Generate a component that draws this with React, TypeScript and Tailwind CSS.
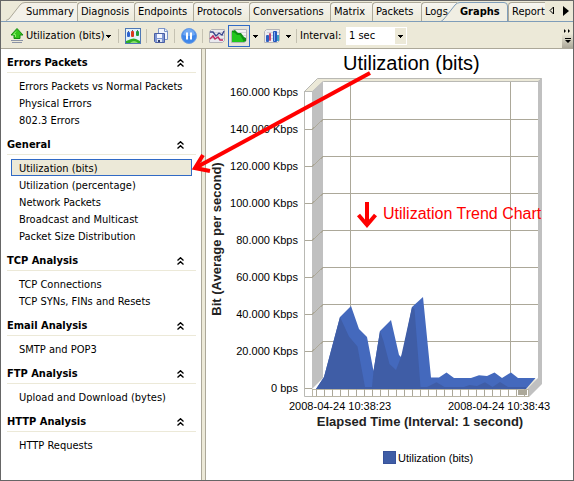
import type { ReactNode } from "react";

interface Tab {
  label: string;
  width: string;
}

interface Section {
  title: string;
  items: string[];
}

const tabs: Tab[] = [
  { label: "Diagnosis", width: "w-[57px]" },
  { label: "Endpoints", width: "w-[59px]" },
  { label: "Protocols", width: "w-[56px]" },
  { label: "Conversations", width: "w-[81px]" },
  { label: "Matrix", width: "w-[42px]" },
  { label: "Packets", width: "w-[49px]" },
  { label: "Logs", width: "w-[36px]" },
];

const sections: Section[] = [
  { title: "Errors Packets", items: ["Errors Packets vs Normal Packets", "Physical Errors", "802.3 Errors"] },
  {
    title: "General",
    items: [
      "Utilization (bits)",
      "Utilization (percentage)",
      "Network Packets",
      "Broadcast and Multicast",
      "Packet Size Distribution",
    ],
  },
  { title: "TCP Analysis", items: ["TCP Connections", "TCP SYNs, FINs and Resets"] },
  { title: "Email Analysis", items: ["SMTP and POP3"] },
  { title: "FTP Analysis", items: ["Upload and Download (bytes)"] },
  { title: "HTTP Analysis", items: ["HTTP Requests"] },
];

const selectedItem = "Utilization (bits)";

const TabBar = () => {
  const tabClass =
    "flex h-[19px] shrink-0 items-start overflow-hidden whitespace-nowrap rounded-tl-[4px] border-l border-t border-[#aca899] bg-linear-to-b from-[#f7f6f1] to-[#ece9d8] pl-[3px] text-left leading-[18px]";

  return (
    <nav className="relative flex h-[21px] items-end overflow-hidden border-b border-[#7f9db9] bg-[#ece9d8]">
      <button className="relative flex h-[19px] w-[76px] shrink-0 items-start pl-[25px] text-left leading-5">
        <svg className="absolute left-[5px] top-0" width="71" height="19" viewBox="0 0 71 19">
          <path d="M0 18.5 L3 17 L14 3 Q16 .5 19 .5 H72 V19 H0 Z" fill="#f3f1e9" />
          <path d="M0 18.5 L3 17 L14 3 Q16 .5 19 .5 H72" fill="none" stroke="#aca899" />
        </svg>
        <span className="relative">Summary</span>
      </button>
      {tabs.map((tab) => (
        <button key={tab.label} className={`${tabClass} ${tab.width}`}>
          {tab.label}
        </button>
      ))}
      <button className="relative -ml-4 flex h-[19px] w-[67px] shrink-0 items-start pl-[19px] text-left font-bold leading-5">
        <svg className="absolute left-0 top-0" width="67" height="20" viewBox="0 0 67 20">
          <path d="M0 20 L2 18 L14 3 Q16 .5 19 .5 H62 Q66 .5 66.5 4 V20 Z" fill="#f0eee3" />
          <path d="M0 19.5 L3 17 L14 3 Q16 .5 19 .5 H63 Q66.5 .5 66.5 4 V20" fill="none" stroke="#7f9db9" />
        </svg>
        <span className="relative">Graphs</span>
      </button>
      <button className={`${tabClass} grow`}>Report</button>
      <div className="absolute right-0 top-0 flex h-[19px] w-7 items-center justify-between bg-[#ece9d8] pl-1 pr-1">
        <button aria-label="Scroll tabs left">
          <svg width="6" height="9" viewBox="0 0 6 9">
            <path d="M4.5 1 L1 4.5 L4.5 8 Z" fill="none" stroke="#000" />
          </svg>
        </button>
        <button aria-label="Scroll tabs right">
          <svg width="6" height="10" viewBox="0 0 6 10">
            <path d="M0 0 L6 5 L0 10 Z" fill="#000" />
          </svg>
        </button>
      </div>
    </nav>
  );
};

const Caret = () => (
  <svg width="5" height="3" viewBox="0 0 5 3" shapeRendering="crispEdges">
    <path d="M0 0h5v1h-1v1h-1v1h-1v-1h-1v-1h-1Z" fill="#000" />
  </svg>
);

const Separator = () => <div className="ml-[2px] mr-[3px] h-[14px] w-px shrink-0 bg-[#c5c2b2]" />;

const ToolButton = ({ label, active, children }: { label: string; active?: boolean; children: ReactNode }) => (
  <button
    aria-label={label}
    className={`flex h-[22px] w-[22px] shrink-0 items-center justify-center ${
      active ? "border border-[#316ac5] bg-[#e6e4da]" : ""
    }`}
  >
    {children}
  </button>
);

const CaretButton = ({ label }: { label: string }) => (
  <button aria-label={label} className="flex h-[22px] w-[11px] shrink-0 items-center justify-center">
    <Caret />
  </button>
);

const Toolbar = () => (
  <div className="flex h-[27px] items-center border-b border-[#aca899] bg-[#ece9d8] pl-[7px] pt-[2px]">
    <button className="flex h-[22px] w-[108px] shrink-0 items-center whitespace-nowrap pl-[2px]">
      <svg width="14" height="16" viewBox="0 0 14 16">
        <path d="M7 .5 L13 7 H10 V10.5 H4 V7 H1 Z" fill="#35c41c" stroke="#168a10" />
        <path d="M6 3.5 L3.5 6.5 H5.5 V9" fill="none" stroke="#8df06c" />
        <path d="M1 12.5 H13 M2 14.5 H12" stroke="#8b93a5" />
      </svg>
      <span className="ml-[2px] grow text-left">Utilization (bits)</span>
      <span className="mr-[5px]">
        <Caret />
      </span>
    </button>
    <Separator />
    <ToolButton label="Save graph">
      <svg width="16" height="16" viewBox="0 0 16 16">
        <rect x=".5" y=".5" width="15" height="15" fill="#e2f2fb" stroke="#4f78b5" />
        <path d="M1 15 V13 Q4 12 6 11 Q9 10 11 11 Q13 12 15 13 V15 Z" fill="#2fae25" />
        <path d="M5 15 Q9 11 13 15" fill="#8ae06a" />
        <rect x="2" y="4" width="3" height="5" rx="1" fill="#2d63cf" />
        <rect x="6" y="3" width="3" height="6" rx="1" fill="#d93a1f" />
        <rect x="11" y="3" width="3" height="5" rx="1" fill="#1f9b3b" />
        <path d="M3.5 3v1M7.5 2v1M12.5 2v1" stroke="#557" />
      </svg>
    </ToolButton>
    <Separator />
    <ToolButton label="Save all">
      <svg width="16" height="16" viewBox="0 0 16 16">
        <path d="M5.5 .5 H12 L14.5 3 V11.5 H5.5 Z" fill="#f2f6fd" stroke="#7b94c8" />
        <path d="M11.5 1 V3.5 H14" fill="none" stroke="#7b94c8" />
        <path d="M1.5 5.5 H11.5 V14.5 H2.5 L1.5 13.500 Z" fill="#7e96d2" stroke="#4a5fa3" />
        <rect x="4" y="6" width="5" height="4" fill="#f4f7ff" />
        <rect x="4" y="11" width="5" height="3" fill="#dfe6f5" />
        <rect x="5" y="12" width="2" height="2" fill="#31406f" />
      </svg>
    </ToolButton>
    <Separator />
    <ToolButton label="Pause">
      <svg width="16" height="16" viewBox="0 0 16 16">
        <circle cx="8" cy="8" r="7.5" fill="#3f87ea" stroke="#6e9ee2" />
        <path d="M2 7 A6 6 0 0 1 14 7 Q8 9 2 7 Z" fill="#72aaf4" />
        <path d="M5 4.500h2v7h-2zM9 4.500h2v7h-2z" fill="#fff" />
      </svg>
    </ToolButton>
    <Separator />
    <ToolButton label="Line chart">
      <svg width="16" height="16" viewBox="0 0 16 16">
        <path d="M2.5 1.5 H15.5 V12.5 L13.5 14.5 H.5 V3.5 Z" fill="#e9e9ee" stroke="#b4b4b8" />
        <path d="M3 4.5h12M3 7.5h12M3 10.5h12" stroke="#cfcfd6" />
        <path d="M1 4 L4 4 L7 8 L10 5 L13 7 L15 3" fill="none" stroke="#39458c" strokeWidth="1.3" />
        <path d="M1 11 L4 8 L6 11 L9 9 L11 12 L14 12" fill="none" stroke="#c02a62" strokeWidth="1.5" />
      </svg>
    </ToolButton>
    <ToolButton label="Area chart" active>
      <svg width="16" height="16" viewBox="0 0 16 16">
        <path d="M2.5 1.5 H15.5 V12.5 L13.5 14.5 H.5 V3.5 Z" fill="#f2f2f2" stroke="#b4b4b8" />
        <path d="M3 4.5h12M3 7.5h12" stroke="#d4d4da" />
        <path d="M1 14 V3 L4 2 L7 5 L10 5 L13 9 L15 10 V13 L13 14 Z" fill="#0e8f13" />
        <path d="M1 14 V4 L4 5 L6 7 L9 7 L12 12 L13 14 Z" fill="#22c71d" />
      </svg>
    </ToolButton>
    <CaretButton label="Area chart options" />
    <ToolButton label="Bar chart">
      <svg width="16" height="16" viewBox="0 0 16 16">
        <path d="M2.5 1.5 H15.5 V12.5 L13.5 14.5 H.5 V3.5 Z" fill="#ececf0" stroke="#b4b4b8" />
        <path d="M3 4.5h12M3 7.5h12M3 10.5h12" stroke="#d0d0d6" />
        <rect x="2" y="7" width="3" height="7" rx="1" fill="#2e5fc0" />
        <rect x="5" y="5" width="2" height="8" rx="1" fill="#c44a78" />
        <rect x="9" y="3" width="4" height="11" rx="1" fill="#2456bd" />
        <path d="M10.5 4v9" stroke="#7fb0f2" />
        <rect x="13" y="7" width="2" height="6" fill="#3a9ec4" />
      </svg>
    </ToolButton>
    <CaretButton label="Bar chart options" />
    <Separator />
    <label htmlFor="interval" className="w-[46px] shrink-0">
      Interval:
    </label>
    <div className="relative h-[18px] w-[61px] shrink-0 bg-white">
      <select id="interval" className="block h-[18px] w-full appearance-none bg-transparent pl-[3px] leading-4 outline-none">
        <option>1 sec</option>
      </select>
      <span className="pointer-events-none absolute bottom-px right-px top-px flex w-[11px] items-center justify-center bg-[#ece9d8]">
        <Caret />
      </span>
    </div>
    <button
      aria-label="More tools"
      className="ml-auto flex h-6 w-[11px] flex-col items-center justify-between bg-linear-to-b from-[#ece9d8] from-40% to-[#aca899] pb-1 pt-[5px]"
    >
      <svg width="7" height="4" viewBox="0 0 7 4">
        <path d="M0 0l2 2l-2 2zM4 0l2 2l-2 2z" fill="#000" />
      </svg>
      <svg width="6" height="6" viewBox="0 0 6 6">
        <path d="M0 0h6v1H0zM0 2h6L3 5z" fill="#000" />
      </svg>
    </button>
  </div>
);

const Sidebar = () => (
  <aside className="w-[200px] shrink-0 bg-white pl-[6px] pr-[5px]">
    {sections.map((section) => (
      <section key={section.title} className="first:-mt-[3px]">
        <h2 className="flex h-[27px] items-center justify-between border-b border-[#ece9d8] pr-[12px] pt-2 font-bold">
          {section.title}
          <svg width="7" height="8" viewBox="0 0 7 8">
            <path d="M.5 3.5 L3.5 .7 L6.5 3.5 M.5 7.5 L3.5 4.7 L6.5 7.5" fill="none" stroke="#000" strokeWidth="1.3" />
          </svg>
        </h2>
        <ul className="px-1 pt-1">
          {section.items.map((item) => (
            <li key={item}>
              <button
                className={`flex h-[17px] w-full items-start whitespace-nowrap border pl-[7px] text-left leading-[17px] ${
                  item === selectedItem ? "border-[#316ac5] bg-[#ece9d8]" : "border-transparent"
                }`}
              >
                {item}
              </button>
            </li>
          ))}
        </ul>
      </section>
    ))}
  </aside>
);

const yLabels = ["160.000 Kbps", "140.000 Kbps", "120.000 Kbps", "100.000 Kbps", "80.000 Kbps", "60.000 Kbps", "40.000 Kbps", "20.000 Kbps", "0 bps"];

const backArea =
  "316,389 324,377 340,317 351,306 359,329 367,337 373.5,371 380,331 391,320 399,355 401,357 403,352 412,307 423,297 431,377.5 439,377.5 446.5,372.5 454,378 471,378 479,375.3 487,376 494.5,372.5 502,378 511,372.5 518,378 535.5,378 526,389";

const frontArea =
  "316,389 324,377 340,317 349,336.5 357.5,346.5 365,387 372,387 373.5,371 380,331 383.5,341 389.5,364 396,370 401,357 412,307 414.5,309 420.5,387 427,387 436.5,382.3 444.5,387 464,387 469.5,385 477,386 485,382.3 492.5,387 500,382 508,387 526,387 526,389";

const TrendChart = () => (
  <svg
    className="block shrink-0 text-[11px]"
    width="366"
    height="431"
    viewBox="206 49 366 431"
    fontFamily='"Liberation Sans", Arial, sans-serif'
    role="img"
    aria-label="Utilization (bits)"
  >
    <text x="343" y="70" fontSize="20">Utilization (bits)</text>

    {/* side wall and top edge */}
    <path d="M304.5 91.5 L317.5 78.5 H541.5 L538.5 81.5 H323.5 L312.5 91.5 Z" fill="#ece9d8" stroke="#b9b9b4" />
    <path d="M312 91.5 L323 81 V378 L312 389 Z" fill="#c0c0c0" />
    <path d="M538 81 L542 78 V384 L529 397 L526 389 L538 378 Z" fill="#c0c0c0" />
    <path d="M304.5 91 V396.5 H528.5" fill="none" stroke="#b9b9b4" />
    <path d="M535 379 L526 389" stroke="#ece9d8" strokeWidth="2" />

    {/* grid */}
    <g fill="none" stroke="#aca899" shapeRendering="crispEdges">
      <path d="M350.5 82 V389 M510.5 82 V389" />
      {[129, 166, 203, 240, 277, 314, 351].map((y) => (
        <path key={y} d={`M305 ${y}.5 H312 L323 ${y - 10}.5 H538`} />
      ))}
      <path d="M305 388.5 H312" />
    </g>

    <polygon points={backArea} fill="#4469bd" />
    <polygon points={frontArea} fill="#3f5da6" />

    {/* time ruler */}
    <rect x="312.5" y="389.5" width="216" height="7" fill="#fff" stroke="#b9b5a5" />
    {Array.from({ length: 27 }, (_, i) => (
      <path key={i} d={`M${316 + i * 8}.5 389 V396`} stroke="#aca899" />
    ))}
    <rect x="518" y="390" width="9" height="5" fill="#aca899" />

    {yLabels.map((label, i) => (
      <text key={label} x="298" y={96 + i * 37} textAnchor="end">
        {label}
      </text>
    ))}
    <text x="289" y="410">2008-04-24 10:38:23</text>
    <text x="448" y="410">2008-04-24 10:38:43</text>
    <text x="420" y="426" fontSize="13" fontWeight="bold" textAnchor="middle" fill="#222">
      Elapsed Time (Interval: 1 second)
    </text>
    <text transform="translate(221 239) rotate(-90)" fontSize="13" fontWeight="bold" textAnchor="middle" fill="#222">
      Bit (Average per second)
    </text>

    <rect x="383.5" y="451.5" width="12" height="12" fill="#3f5da6" stroke="#38529a" />
    <text x="398" y="462">Utilization (bits)</text>

    <path d="M367 202 V225 M358.5 215 L367 225 L375.5 215" fill="none" stroke="#f00" strokeWidth="4" />
    <text x="383" y="219" fontSize="16" fill="#f00">Utilization Trend Chart</text>
  </svg>
);

const App = () => (
  <div className='flex min-h-screen flex-col border border-[#666] bg-white font-["DejaVu_Sans_Condensed","DejaVu_Sans",Tahoma,sans-serif] text-[11px] leading-4 text-black'>
    <TabBar />
    <Toolbar />
    <main className="relative flex grow">
      <Sidebar />
      <div className="w-[5px] shrink-0 border-x border-[#aca899] bg-[#ece9d8]" />
      <div className="min-w-0 grow overflow-hidden">
        <TrendChart />
      </div>
      {/* callout arrow from the chart title to the selected graph */}
      <svg className="pointer-events-none absolute left-[190px] top-[20px]" width="184" height="108" viewBox="191 69 184 108">
        <path d="M370 73 L197 167" stroke="#f00" strokeWidth="4" />
        <path d="M203 155 L195 168 L210 171" fill="none" stroke="#f00" strokeWidth="4" />
      </svg>
    </main>
  </div>
);

export default App;
